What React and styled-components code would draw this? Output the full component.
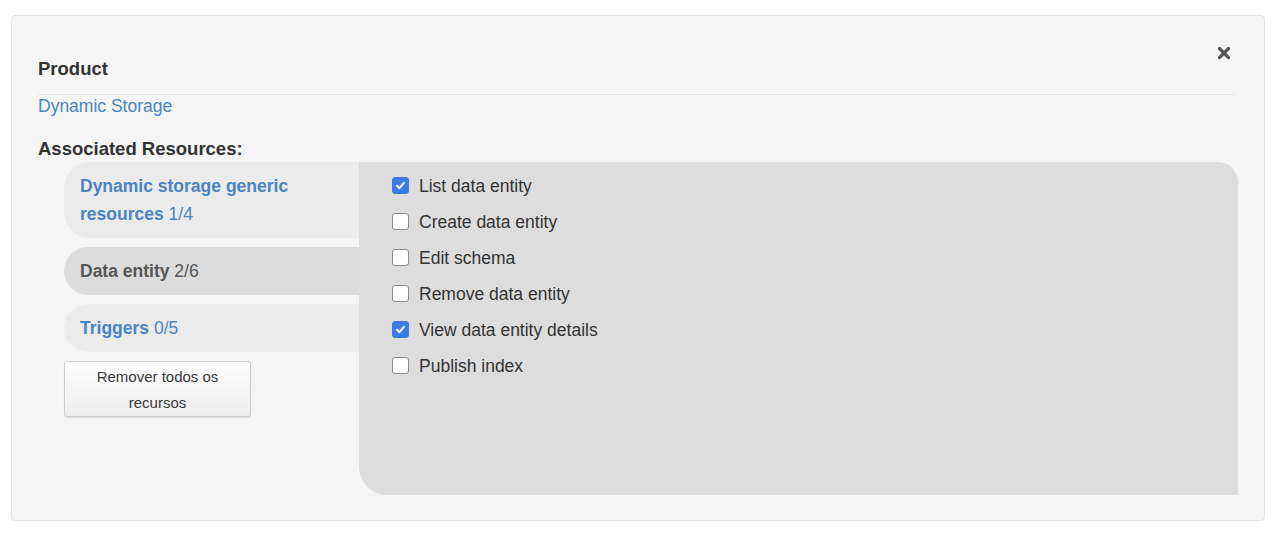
import React, { useState } from 'react';
import styled, { createGlobalStyle } from 'styled-components';

const GlobalStyle = createGlobalStyle`
  body {
    margin: 0;
    background: #ffffff;
    font-family: "Liberation Sans", Arial, sans-serif;
    color: #333;
  }
`;

const Page = styled.div`
  padding: 15px 15px 0 11px;
`;

const Card = styled.div`
  box-sizing: border-box;
  height: 506px;
  display: flex;
  flex-direction: column;
  background: #f5f5f5;
  border: 1px solid #e3e3e3;
  border-radius: 4px;
  box-shadow: 0 1px 1px rgba(0, 0, 0, 0.04);
  padding: 0 26px 25px 26px;
`;

const Header = styled.div`
  display: flex;
  justify-content: space-between;
  align-items: flex-start;
  padding: 42px 0 14px 0;
  margin-right: 3px;
  border-bottom: 1px solid #e6e6e6;
`;

const Title = styled.h4`
  margin: 0;
  font-size: 18.5px;
  line-height: 22px;
  font-weight: bold;
  color: #333;
`;

const CloseButton = styled.button`
  margin: -12px 4px 0 0;
  padding: 0;
  border: none;
  background: none;
  width: 14px;
  height: 14px;
  display: flex;
  cursor: pointer;
`;

const ProductLink = styled.a`
  display: block;
  font-size: 17.5px;
  line-height: 22px;
  color: #4a84c4;
  text-decoration: none;
`;

const SectionTitle = styled.div`
  margin-top: 21px;
  font-size: 18.5px;
  line-height: 22px;
  font-weight: bold;
  color: #333;
`;

const Body = styled.div`
  flex: 1;
  display: flex;
  margin-top: 2px;
`;

const TabColumn = styled.div`
  width: 321px;
  flex-shrink: 0;
  box-sizing: border-box;
  padding-left: 26px;
`;

const Tab = styled.div`
  padding: 10px 16px;
  margin-bottom: 9px;
  font-size: 17.5px;
  line-height: 28px;
  border-radius: 26px 0 0 26px;
  background: ${p => (p.$active ? '#dcdcdc' : '#ebebeb')};
  color: ${p => (p.$active ? '#555' : '#4a84c4')};
  cursor: pointer;
  b {
    font-weight: bold;
  }
`;

const RemoveButton = styled.button`
  display: block;
  box-sizing: border-box;
  width: 187px;
  margin-top: 2px;
  padding: 2px 12px 1px;
  font-family: "Liberation Sans", Arial, sans-serif;
  font-size: 15px;
  line-height: 25.5px;
  color: #3a3a3a;
  background: linear-gradient(#fdfdfd, #eeeeee);
  border: 1px solid #cccccc;
  border-radius: 3px;
  box-shadow: 0 1px 1px rgba(0, 0, 0, 0.12);
`;

const Panel = styled.div`
  flex: 1;
  background: #dddddd;
  border-radius: 0 20px 0 28px;
  padding: 6px 33px;
`;

const Option = styled.label`
  display: flex;
  align-items: center;
  gap: 10px;
  height: 36px;
  font-size: 17.5px;
  color: #333;
  cursor: pointer;
`;

const Box = styled.span`
  box-sizing: border-box;
  width: 17px;
  height: 17px;
  border-radius: 3px;
  display: flex;
  align-items: center;
  justify-content: center;
  background: ${p => (p.$checked ? '#3b7be6' : '#ffffff')};
  border: 1px solid ${p => (p.$checked ? '#3b7be6' : '#8a8a8a')};
  margin-top: -2px;
`;

const tabs = [
  { name: 'Dynamic storage generic resources', count: '1/4' },
  { name: 'Data entity', count: '2/6' },
  { name: 'Triggers', count: '0/5' },
];

const initialOptions = [
  { label: 'List data entity', checked: true },
  { label: 'Create data entity', checked: false },
  { label: 'Edit schema', checked: false },
  { label: 'Remove data entity', checked: false },
  { label: 'View data entity details', checked: true },
  { label: 'Publish index', checked: false },
];

const App = () => {
  const [active, setActive] = useState(1);
  const [options, setOptions] = useState(initialOptions);

  const toggle = i => {
    setOptions(options.map((o, j) => (j === i ? { ...o, checked: !o.checked } : o)));
  };

  return (
    <Page>
      <GlobalStyle />
      <Card>
        <Header>
          <Title>Product</Title>
          <CloseButton type="button" aria-label="Close">
            <svg width="14" height="14" viewBox="0 0 14 14">
              <path d="M2.5 2.5 L11.5 11.5 M11.5 2.5 L2.5 11.5" stroke="#555" strokeWidth="3.2" strokeLinecap="round" />
            </svg>
          </CloseButton>
        </Header>
        <ProductLink href="#">Dynamic Storage</ProductLink>
        <SectionTitle>Associated Resources:</SectionTitle>
        <Body>
          <TabColumn>
            {tabs.map((t, i) => (
              <Tab key={t.name} $active={i === active} onClick={() => setActive(i)}>
                <b>{t.name}</b> {t.count}
              </Tab>
            ))}
            <RemoveButton type="button">Remover todos os recursos</RemoveButton>
          </TabColumn>
          <Panel>
            {options.map((o, i) => (
              <Option key={o.label} onClick={() => toggle(i)}>
                <Box $checked={o.checked}>
                  {o.checked && (
                    <svg width="11" height="11" viewBox="0 0 11 11">
                      <path d="M2 5.8 L4.4 8.2 L9 2.8" fill="none" stroke="#fff" strokeWidth="2" strokeLinecap="round" strokeLinejoin="round" />
                    </svg>
                  )}
                </Box>
                {o.label}
              </Option>
            ))}
          </Panel>
        </Body>
      </Card>
    </Page>
  );
};

export default App;
